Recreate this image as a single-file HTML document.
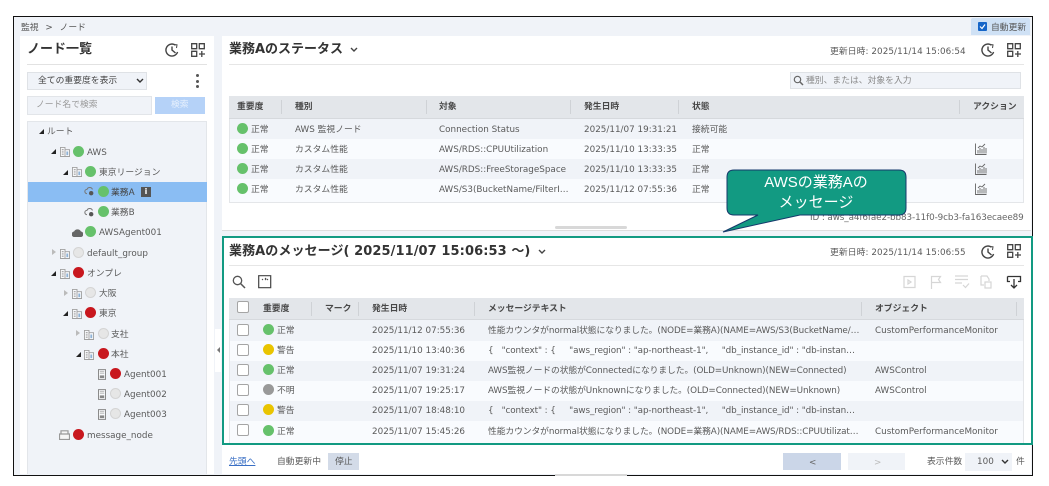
<!DOCTYPE html>
<html><head><meta charset="utf-8">
<style>
html,body{margin:0;padding:0;background:#fff}
body{width:1049px;height:486px;position:relative;overflow:hidden;font-family:"DejaVu Sans","Noto Sans CJK JP",sans-serif;font-size:8.8px;color:#5a5a5a}
.a,.t,.d,svg.i{position:absolute}
.a{display:block}
.t{white-space:nowrap;line-height:12px;height:12px;margin-top:1px}
.d{width:11px;height:11px;border-radius:50%;margin-top:-1px}
.g{background:#66c16b}.r{background:#c8171e}.y{background:#e9c400}.n{background:#999}.e{background:#e6e6e6;border:1px solid #d4d4d4;width:9px;height:9px;box-sizing:content-box}
.h{font-weight:bold;color:#484848}
.T{font-size:13px;font-weight:bold;color:#333;line-height:16px;height:16px}
.cb{position:absolute;width:10px;height:10px;border:1px solid #a5a5a5;border-radius:2px;background:#fff;margin-top:-1px}
.sep{position:absolute;width:1px;height:14px;background:#cfd2d6}
svg.i{fill:none;stroke:#444;stroke-width:1.2}
.tri{position:absolute;width:0;height:0;border-style:solid;border-width:0 0 5px 5px;border-color:transparent transparent #222 transparent}
.tro{position:absolute;width:0;height:0;border-style:solid;border-width:3.5px 0 3.5px 4px;border-color:transparent transparent transparent #bbb}
</style></head><body>
<svg width="0" height="0" style="position:absolute"><defs>
<symbol id="hist" viewBox="0 0 14 14"><path d="M10.5 2.2A6 6 0 1 0 12.6 9" fill="none" stroke="#444" stroke-width="1.4"/><path d="M7 3.5V7L10.5 10" fill="none" stroke="#444" stroke-width="1.4"/><path d="M8.5 1.5l3.5 .3L11.5 5" fill="none" stroke="#444" stroke-width="1"/></symbol>
<symbol id="grid" viewBox="0 0 14 14"><path d="M.7.7h5v5h-5zM8.3.7h5v5h-5zM.7 8.3h5v5h-5zM10.8 8v6M8 11h6" fill="none" stroke="#444" stroke-width="1.3"/></symbol>
<symbol id="node" viewBox="0 0 11 12"><path d="M.5 1.5h5v10h-5zM5.5 4h5v7.500h-5z" fill="#f8f9fb" stroke="#a0a0a0" stroke-width="1"/><path d="M2 4h2M2 6.500h2M2 9h2" stroke="#a0a0a0"/><path d="M7 6h2v4H7z" fill="#8fb3d6"/></symbol>
<symbol id="ag" viewBox="0 0 9 12"><path d="M.5.500h8v11h-8z" fill="#f8f9fb" stroke="#888"/><path d="M2 7h5v3H2z" fill="#888"/><path d="M2 2.500h5M2 4.500h5" stroke="#bbb"/></symbol>
<symbol id="cl" viewBox="0 0 13 12"><path d="M3.500 8.500A2.500 2.500 0 0 1 3.500 3.500 3.500 3.500 0 0 1 10 3.500" fill="none" stroke="#777"/><circle cx="8.500" cy="8" r="2.600" fill="#555"/></symbol>
<symbol id="ch" viewBox="0 0 12 12"><path d="M.5.500v11h11" fill="none" stroke="#666" stroke-width=".9"/><path d="M3 10.500V7M5 10.500V5M7 10.500V6M9 10.500V4M11 10.500V5M3 5l2-2 2 1 3-3" fill="none" stroke="#666" stroke-width=".9"/></symbol>
</defs></svg>

<!-- frame -->
<div class="a" style="left:13px;top:16px;width:1018px;height:458px;border:1px solid #111;background:#f0f3f8;overflow:hidden"></div>
<div class="t" style="left:21px;top:21px;color:#555;word-spacing:4px">監視 &gt; ノード</div>
<div class="a" style="left:971px;top:18px;width:59px;height:17px;background:#cfe1f5;border-radius:2px 2px 0 0"></div>
<div class="a" style="left:978px;top:22px;width:9px;height:9px;background:#1565c8;border-radius:1px"></div>
<svg class="i" style="left:978px;top:22px;stroke:#fff" width="9" height="9"><path d="M2 4.500l2 2 3-4" fill="none"/></svg>
<div class="t" style="left:991px;top:21px;color:#555">自動更新</div>

<!-- left panel -->
<div class="a" style="left:20px;top:36px;width:194px;height:438px;background:#fff"></div>
<div class="t T" style="left:27px;top:41px">ノード一覧</div>
<svg class="i" style="left:165px;top:43px;stroke:none" width="14" height="14"><use href="#hist"/></svg>
<svg class="i" style="left:191px;top:43px;stroke:none" width="14" height="14"><use href="#grid"/></svg>
<div class="a" style="left:27px;top:64px;width:180px;height:1px;background:#e2e2e2"></div>
<div class="a" style="left:27px;top:72px;width:118px;height:16px;background:#f0f3f8;border:1px solid #dfe2e6;box-sizing:content-box"></div>
<div class="t" style="left:38px;top:74px;color:#444">全ての重要度を表示</div>
<svg class="i" style="left:136px;top:78px" width="8" height="6"><path d="M1 1l3 3 3-3" stroke="#333" stroke-width="1.400"/></svg>
<div class="a" style="left:196px;top:74px;width:3px;height:3px;border-radius:50%;background:#555"></div>
<div class="a" style="left:196px;top:80px;width:3px;height:3px;border-radius:50%;background:#555"></div>
<div class="a" style="left:196px;top:85px;width:3px;height:3px;border-radius:50%;background:#555"></div>
<div class="a" style="left:27px;top:96px;width:123px;height:17px;background:#f0f3f8;border:1px solid #e2e5e9"></div>
<div class="t" style="left:36px;top:98px;color:#999">ノード名で検索</div>
<div class="a" style="left:155px;top:97px;width:50px;height:17px;background:#b5d2f8"></div>
<div class="t" style="left:171px;top:98px;color:#e6f0fd">検索</div>

<div class="a" style="left:27px;top:121px;width:180px;height:353px;background:#f0f3f8;border:1px solid #e3e6ea;border-bottom:none;box-sizing:border-box"></div>
<div class="a" style="left:28px;top:182px;width:179px;height:20px;background:#8abdf3"></div>

<div class="tri" style="left:39px;top:129px"></div><div class="t" style="left:47px;top:125px">ルート</div>

<div class="tri" style="left:51px;top:149px"></div><svg class="i" style="left:60px;top:146px;stroke:none" width="10" height="11"><use href="#node"/></svg><div class="d g" style="left:73px;top:147px"></div><div class="t" style="left:87px;top:146px">AWS</div>
<div class="tri" style="left:63px;top:170px"></div><svg class="i" style="left:72px;top:166px;stroke:none" width="10" height="11"><use href="#node"/></svg><div class="d g" style="left:85px;top:167px"></div><div class="t" style="left:99px;top:166px">東京リージョン</div>
<svg class="i" style="left:84px;top:186px;stroke:none" width="11" height="11"><use href="#cl"/></svg><div class="d g" style="left:98px;top:187px"></div><div class="t" style="left:111px;top:186px;color:#444">業務A</div>
<div class="a" style="left:141px;top:187px;width:10px;height:10px;background:#555;color:#fff;font-size:8px;line-height:10px;text-align:center;font-weight:bold">i</div>
<svg class="i" style="left:84px;top:207px;stroke:none" width="11" height="11"><use href="#cl"/></svg><div class="d g" style="left:98px;top:207px"></div><div class="t" style="left:111px;top:206px">業務B</div>
<svg class="i" style="left:72px;top:228px" width="11" height="9"><path d="M2.500 8.500A2.200 2.200 0 0 1 2.500 4 3.200 3.200 0 0 1 8.500 4 2.200 2.200 0 0 1 8.500 8.500z" fill="#666" stroke="#666"/></svg><div class="d g" style="left:85px;top:227px"></div><div class="t" style="left:99px;top:226px">AWSAgent001</div>

<div class="tro" style="left:52px;top:249px"></div><svg class="i" style="left:60px;top:248px;stroke:none" width="10" height="11"><use href="#node"/></svg><div class="d e" style="left:73px;top:248px"></div><div class="t" style="left:87px;top:247px">default_group</div>
<div class="tri" style="left:51px;top:271px"></div><svg class="i" style="left:60px;top:268px;stroke:none" width="10" height="11"><use href="#node"/></svg><div class="d r" style="left:73px;top:268px"></div><div class="t" style="left:87px;top:267px">オンプレ</div>
<div class="tro" style="left:64px;top:290px"></div><svg class="i" style="left:72px;top:288px;stroke:none" width="10" height="11"><use href="#node"/></svg><div class="d e" style="left:85px;top:288px"></div><div class="t" style="left:99px;top:287px">大阪</div>
<div class="tri" style="left:63px;top:311px"></div><svg class="i" style="left:72px;top:308px;stroke:none" width="10" height="11"><use href="#node"/></svg><div class="d r" style="left:85px;top:308px"></div><div class="t" style="left:99px;top:307px">東京</div>
<div class="tro" style="left:76px;top:330px"></div><svg class="i" style="left:84px;top:329px;stroke:none" width="10" height="11"><use href="#node"/></svg><div class="d e" style="left:98px;top:329px"></div><div class="t" style="left:111px;top:328px">支社</div>
<div class="tri" style="left:76px;top:352px"></div><svg class="i" style="left:84px;top:349px;stroke:none" width="10" height="11"><use href="#node"/></svg><div class="d r" style="left:98px;top:349px"></div><div class="t" style="left:111px;top:348px">本社</div>
<svg class="i" style="left:98px;top:369px;stroke:none" width="8" height="11"><use href="#ag"/></svg><div class="d r" style="left:110px;top:369px"></div><div class="t" style="left:124px;top:368px">Agent001</div>
<svg class="i" style="left:98px;top:389px;stroke:none" width="8" height="11"><use href="#ag"/></svg><div class="d e" style="left:110px;top:389px"></div><div class="t" style="left:124px;top:388px">Agent002</div>
<svg class="i" style="left:98px;top:409px;stroke:none" width="8" height="11"><use href="#ag"/></svg><div class="d e" style="left:110px;top:409px"></div><div class="t" style="left:124px;top:408px">Agent003</div>
<svg class="i" style="left:59px;top:430px" width="11" height="10"><path d="M.5 4h10v5.500H.5zM2 4V.800h7V4" stroke="#999" fill="#f6f6f6"/></svg><div class="d r" style="left:73px;top:430px"></div><div class="t" style="left:87px;top:429px">message_node</div>

<div class="a" style="left:215px;top:329px;width:6px;height:43px;background:#fff"></div>
<div class="a" style="left:217px;top:347px;width:0;height:0;border-style:solid;border-width:3px 3px 3px 0;border-color:transparent #777 transparent transparent"></div>

<!-- top right panel -->
<div class="a" style="left:222px;top:36px;width:809px;height:195px;background:#fff"></div>
<div class="t T" style="left:229px;top:41px">業務Aのステータス</div>
<svg class="i" style="left:350px;top:47px" width="8" height="6"><path d="M1 1l3 3 3-3" stroke-width="1.400"/></svg>
<div class="t" style="left:830px;top:45px;letter-spacing:.07px">更新日時: 2025/11/14 15:06:54</div>
<svg class="i" style="left:981px;top:43px;stroke:none" width="14" height="14"><use href="#hist"/></svg>
<svg class="i" style="left:1007px;top:43px;stroke:none" width="14" height="14"><use href="#grid"/></svg>
<div class="a" style="left:229px;top:64px;width:795px;height:1px;background:#e6e6e6"></div>
<div class="a" style="left:790px;top:72px;width:231px;height:17px;background:#f0f3f8;border:1px solid #dfe2e6;box-sizing:border-box"></div>
<svg class="i" style="left:793px;top:75px;stroke:#666" width="11" height="11"><circle cx="4.500" cy="4.500" r="3.200"/><path d="M7 7l3 3" stroke-width="1.500"/></svg>
<div class="t" style="left:806px;top:74px;color:#888">種別、または、対象を入力</div>

<div class="a" style="left:229px;top:96px;width:795px;height:107px;background:#f9fbfe;border:1px solid #e4e6e9;box-sizing:border-box"></div>
<div class="a" style="left:229px;top:96px;width:795px;height:23px;background:#e3e6ea;border-bottom:1px solid #d6d9dd;box-sizing:border-box"></div>
<div class="a" style="left:230px;top:119px;width:793px;height:20px;background:#f0f3f8"></div>
<div class="a" style="left:230px;top:159px;width:793px;height:20px;background:#f0f3f8"></div>
<div class="t h" style="left:237px;top:100px">重要度</div><div class="sep" style="left:281px;top:100px"></div>
<div class="t h" style="left:295px;top:100px">種別</div><div class="sep" style="left:426px;top:100px"></div>
<div class="t h" style="left:439px;top:100px">対象</div><div class="sep" style="left:570px;top:100px"></div>
<div class="t h" style="left:584px;top:100px">発生日時</div><div class="sep" style="left:678px;top:100px"></div>
<div class="t h" style="left:692px;top:100px">状態</div><div class="sep" style="left:959px;top:100px"></div>
<div class="t h" style="left:973px;top:100px">アクション</div>

<div class="d g" style="left:237px;top:124px"></div><div class="t" style="left:251px;top:123px">正常</div><div class="t" style="left:295px;top:123px">AWS 監視ノード</div><div class="t" style="left:439px;top:123px">Connection Status</div><div class="t" style="left:584px;top:123px">2025/11/07 19:31:21</div><div class="t" style="left:692px;top:123px">接続可能</div>
<div class="d g" style="left:237px;top:144px"></div><div class="t" style="left:251px;top:143px">正常</div><div class="t" style="left:295px;top:143px">カスタム性能</div><div class="t" style="left:439px;top:143px">AWS/RDS::CPUUtilization</div><div class="t" style="left:584px;top:143px">2025/11/10 13:33:35</div><div class="t" style="left:692px;top:143px">正常</div><svg class="i" style="left:975px;top:143px;stroke:none" width="12" height="12"><use href="#ch"/></svg>
<div class="d g" style="left:237px;top:164px"></div><div class="t" style="left:251px;top:163px">正常</div><div class="t" style="left:295px;top:163px">カスタム性能</div><div class="t" style="left:439px;top:163px">AWS/RDS::FreeStorageSpace</div><div class="t" style="left:584px;top:163px">2025/11/10 13:33:35</div><div class="t" style="left:692px;top:163px">正常</div><svg class="i" style="left:975px;top:163px;stroke:none" width="12" height="12"><use href="#ch"/></svg>
<div class="d g" style="left:237px;top:184px"></div><div class="t" style="left:251px;top:183px">正常</div><div class="t" style="left:295px;top:183px">カスタム性能</div><div class="t" style="left:439px;top:183px">AWS/S3(BucketName/FilterI…</div><div class="t" style="left:584px;top:183px">2025/11/12 07:55:36</div><div class="t" style="left:692px;top:183px">正常</div><svg class="i" style="left:975px;top:183px;stroke:none" width="12" height="12"><use href="#ch"/></svg>
<div class="t" style="left:810px;top:211px;color:#666;letter-spacing:-.1px">ID : aws_a4f6fae2-bb83-11f0-9cb3-fa163ecaee89</div>
<div class="a" style="left:555px;top:226px;width:72px;height:3px;background:#d8d8d8;border-radius:2px"></div>
<div class="a" style="left:222px;top:230px;width:809px;height:1px;background:#ddd"></div>

<!-- bottom right panel -->
<div class="a" style="left:222px;top:236px;width:811px;height:209px;background:#fff"></div>
<div class="t T" style="left:229px;top:243px;letter-spacing:.08px">業務Aのメッセージ( 2025/11/07 15:06:53 ～)</div>
<svg class="i" style="left:538px;top:249px" width="8" height="6"><path d="M1 1l3 3 3-3" stroke-width="1.400"/></svg>
<div class="t" style="left:830px;top:246px;letter-spacing:.07px">更新日時: 2025/11/14 15:06:55</div>
<svg class="i" style="left:981px;top:245px;stroke:none" width="14" height="14"><use href="#hist"/></svg>
<svg class="i" style="left:1007px;top:244px;stroke:none" width="14" height="14"><use href="#grid"/></svg>
<div class="a" style="left:229px;top:265px;width:795px;height:1px;background:#e6e6e6"></div>
<svg class="i" style="left:232px;top:275px;stroke:#555" width="14" height="14"><circle cx="5.500" cy="5.500" r="4.200" stroke-width="1.300"/><path d="M8.500 8.500l4.500 4.500" stroke-width="1.500"/></svg>
<svg class="i" style="left:258px;top:275px;stroke:#444" width="14" height="14"><path d="M.7.700h12v12H.7z"/><path d="M4 4l1 1M7 5l1-1-1-1M9 5l1-1" stroke-width="1"/></svg>
<svg class="i" style="left:903px;top:275px;stroke:#d6d6d6" width="122" height="15"><path d="M1 1.500h11v11H1zM5 5l3 2-3 2z"/><path d="M28.500 14V1.500h9l-2 3 2 3h-9"/><path d="M52 1h13M52 4.500h13M52 8h7M60 10l2.500 2.500 3.500-4"/><path d="M78 1h6l2 3v2M78 1v9h3M82 7h6v6h-6z"/><path d="M104.500 1.500h13v5h-2.500M104.500 1.500v5h2.500M111 4v9M108 10l3 3 3-3" stroke="#333" stroke-width="1.300"/></svg>

<div class="a" style="left:229px;top:298px;width:795px;height:146px;background:#f9fbfe;border-left:1px solid #e4e6e9;border-right:1px solid #e4e6e9;box-sizing:border-box"></div>
<div class="a" style="left:229px;top:298px;width:795px;height:22px;background:#e3e6ea;border-bottom:1px solid #d6d9dd;box-sizing:border-box"></div>
<div class="a" style="left:230px;top:320px;width:793px;height:21px;background:#f0f3f8"></div>
<div class="a" style="left:230px;top:361px;width:793px;height:20px;background:#f0f3f8"></div>
<div class="a" style="left:230px;top:401px;width:793px;height:20px;background:#f0f3f8"></div>
<div class="cb" style="left:237px;top:302px"></div>
<div class="t h" style="left:263px;top:302px">重要度</div><div class="sep" style="left:311px;top:302px"></div>
<div class="t h" style="left:325px;top:302px">マーク</div><div class="sep" style="left:358px;top:302px"></div>
<div class="t h" style="left:372px;top:302px">発生日時</div><div class="sep" style="left:474px;top:302px"></div>
<div class="t h" style="left:488px;top:302px">メッセージテキスト</div><div class="sep" style="left:861px;top:302px"></div>
<div class="t h" style="left:875px;top:302px">オブジェクト</div><div class="sep" style="left:1016px;top:302px"></div>

<div class="cb" style="left:237px;top:325px"></div><div class="d g" style="left:263px;top:325px"></div><div class="t" style="left:277px;top:324px">正常</div><div class="t" style="left:372px;top:324px">2025/11/12 07:55:36</div><div class="t" style="left:488px;top:324px;letter-spacing:-.1px">性能カウンタがnormal状態になりました。(NODE=業務A)(NAME=AWS/S3(BucketName/…</div><div class="t" style="left:875px;top:324px">CustomPerformanceMonitor</div>
<div class="cb" style="left:237px;top:345px"></div><div class="d y" style="left:263px;top:345px"></div><div class="t" style="left:277px;top:344px">警告</div><div class="t" style="left:372px;top:344px">2025/11/10 13:40:36</div><div class="t" style="left:488px;top:344px;white-space:pre;letter-spacing:-.1px">{   "context" : {     "aws_region" : "ap-northeast-1",     "db_instance_id" : "db-instan…</div>
<div class="cb" style="left:237px;top:365px"></div><div class="d g" style="left:263px;top:365px"></div><div class="t" style="left:277px;top:364px">正常</div><div class="t" style="left:372px;top:364px">2025/11/07 19:31:24</div><div class="t" style="left:488px;top:364px;letter-spacing:-.1px">AWS監視ノードの状態がConnectedになりました。(OLD=Unknown)(NEW=Connected)</div><div class="t" style="left:875px;top:364px">AWSControl</div>
<div class="cb" style="left:237px;top:385px"></div><div class="d n" style="left:263px;top:385px"></div><div class="t" style="left:277px;top:384px">不明</div><div class="t" style="left:372px;top:384px">2025/11/07 19:25:17</div><div class="t" style="left:488px;top:384px;letter-spacing:-.1px">AWS監視ノードの状態がUnknownになりました。(OLD=Connected)(NEW=Unknown)</div><div class="t" style="left:875px;top:384px">AWSControl</div>
<div class="cb" style="left:237px;top:405px"></div><div class="d y" style="left:263px;top:405px"></div><div class="t" style="left:277px;top:404px">警告</div><div class="t" style="left:372px;top:404px">2025/11/07 18:48:10</div><div class="t" style="left:488px;top:404px;white-space:pre;letter-spacing:-.1px">{   "context" : {     "aws_region" : "ap-northeast-1",     "db_instance_id" : "db-instan…</div>
<div class="cb" style="left:237px;top:425px"></div><div class="d g" style="left:263px;top:426px"></div><div class="t" style="left:277px;top:425px">正常</div><div class="t" style="left:372px;top:425px">2025/11/07 15:45:26</div><div class="t" style="left:488px;top:425px;letter-spacing:-.1px">性能カウンタがnormal状態になりました。(NODE=業務A)(NAME=AWS/RDS::CPUUtilizat…</div><div class="t" style="left:875px;top:425px">CustomPerformanceMonitor</div>

<!-- footer -->
<div class="a" style="left:222px;top:445px;width:809px;height:29px;background:#fff"></div>
<div class="a" style="left:222px;top:236px;width:811px;height:209px;border:2px solid #129a82;box-sizing:border-box"></div>
<div class="t" style="left:229px;top:455px;color:#3a6fc4;text-decoration:underline">先頭へ</div>
<div class="t" style="left:277px;top:455px">自動更新中</div>
<div class="a" style="left:328px;top:453px;width:31px;height:17px;background:#d3dbe8"></div>
<div class="t" style="left:335px;top:455px">停止</div>
<div class="a" style="left:783px;top:453px;width:58px;height:17px;background:#cbd6e8"></div>
<div class="t" style="left:809px;top:456px;color:#666">&lt;</div>
<div class="a" style="left:848px;top:453px;width:57px;height:17px;background:#f0f3f8"></div>
<div class="t" style="left:874px;top:456px;color:#bbb">&gt;</div>
<div class="t" style="left:927px;top:455px">表示件数</div>
<div class="a" style="left:965px;top:453px;width:47px;height:18px;background:#f0f3f8"></div>
<div class="t" style="left:977px;top:455px">100</div>
<svg class="i" style="left:1001px;top:459px" width="8" height="6"><path d="M1 1l3 3 3-3" stroke="#333" stroke-width="1.400"/></svg>
<div class="t" style="left:1016px;top:455px">件</div>
<div class="a" style="left:555px;top:474px;width:72px;height:2px;background:#d8d8d8"></div>

<!-- callout -->
<svg class="i" style="left:715px;top:165px;stroke:none" width="200" height="72"><path d="M12 12Q12 5 19 5H184Q191 5 191 12V43Q191 50 184 50H85L8 67 43 50H19Q12 50 12 43Z" fill="#129a82" stroke="#15386b" stroke-width="1"/></svg>
<div class="t" style="left:727px;top:172px;width:178px;height:20px;line-height:20px;font-family:'Liberation Sans','Noto Sans CJK JP',sans-serif;font-size:15px;color:#fff;text-align:center">AWSの業務Aの</div>
<div class="t" style="left:727px;top:192px;width:178px;height:20px;line-height:20px;font-family:'Liberation Sans','Noto Sans CJK JP',sans-serif;font-size:15px;color:#fff;text-align:center">メッセージ</div>
</body></html>
